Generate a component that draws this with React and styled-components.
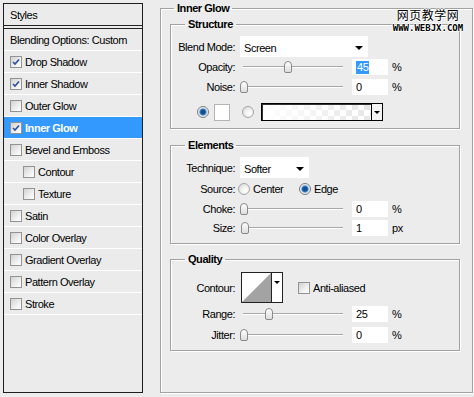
import styled, { createGlobalStyle } from 'styled-components';

const GlobalStyle = createGlobalStyle`
  html, body {
    margin: 0;
    padding: 0;
    background: #ececec;
  }
  body {
    font-family: "Liberation Sans", Tahoma, "DejaVu Sans", sans-serif;
    font-size: 11px;
    letter-spacing: -0.45px;
    color: #000;
  }
  * {
    box-sizing: border-box;
  }
`;

const Page = styled.div`
  position: relative;
  display: flex;
  align-items: flex-start;
  width: 474px;
  height: 397px;
  padding: 2px 0 0 3px;
  overflow: hidden;
`;

/* ---------- left: styles list ---------- */

const StylesPanel = styled.div`
  width: 140px;
  height: 390px;
  margin-top: 1px;
  border: 1px solid #1e1e1e;
  background: #ebebeb;
  display: flex;
  flex-direction: column;
  flex-shrink: 0;
`;

const PanelHeader = styled.div`
  height: 22px;
  padding-left: 6px;
  display: flex;
  align-items: center;
  border-bottom: 1px solid #222;
`;

const BlendingRow = styled.div`
  height: 23px;
  margin-top: 2px;
  padding-left: 6px;
  display: flex;
  align-items: center;
  border-top: 1px solid #222;
  border-bottom: 1px solid #fff;
`;

const StyleRow = styled.div`
  height: 22px;
  display: flex;
  align-items: center;
  gap: 3px;
  padding-left: ${p => (p.$indent ? 19 : 6)}px;
  border-bottom: 1px solid #fff;
  background: ${p => (p.$active ? '#3399ff' : 'transparent')};
  color: ${p => (p.$active ? '#fff' : '#000')};
  font-weight: ${p => (p.$active ? 'bold' : 'normal')};
`;

const Box = styled.span`
  width: 12px;
  height: 12px;
  flex-shrink: 0;
  display: inline-flex;
  align-items: center;
  justify-content: center;
  border: 1px solid #939393;
  background: linear-gradient(135deg, #d2d2d2 0%, #f0f0f0 60%, #fff 100%);
  margin-left: ${p => p.$ml || 0}px;
`;

const CheckBox = ({ checked, ml }) => (
  <Box $ml={ml}>
    {checked && (
      <svg width="10" height="10" viewBox="0 0 10 10">
        <path d="M2 5 L4 7 L8 2.5" fill="none" stroke="#2d4f9e" strokeWidth="1.6" />
      </svg>
    )}
  </Box>
);

/* ---------- right: group boxes ---------- */

const Group = styled.fieldset`
  margin: ${p => p.$mt || 0}px 0 0 ${p => p.$ml || 0}px;
  padding: ${p => p.$pad};
  width: ${p => p.$w}px;
  height: ${p => (p.$h ? `${p.$h}px` : 'auto')};
  min-width: 0;
  border: 1px solid #a2a2a2;
  box-shadow: 1px 1px 0 #fff, inset 1px 1px 0 #fff;
  flex-shrink: 0;
`;

const GroupTitle = styled.legend`
  margin-left: ${p => p.$ml}px;
  padding: 0 3px;
  font-weight: bold;
  line-height: 13px;
`;

const FieldRow = styled.div`
  display: flex;
  align-items: center;
  height: ${p => p.$h}px;
  margin-top: ${p => p.$mt || 0}px;
  padding-left: ${p => p.$pl || 0}px;
`;

const FieldLabel = styled.span`
  width: 64px;
  flex-shrink: 0;
  text-align: right;
  margin-right: ${p => (p.$gap === undefined ? 5 : p.$gap)}px;
  white-space: nowrap;
`;

const Select = styled.div`
  width: ${p => p.$w}px;
  height: 21px;
  background: #fff;
  display: flex;
  align-items: center;
  padding: 2px 5px 0 4px;
`;

const DownArrow = styled.span`
  margin-left: auto;
  width: 0;
  height: 0;
  border-left: 4px solid transparent;
  border-right: 4px solid transparent;
  border-top: 4px solid #000;
`;

const Slider = styled.div`
  position: relative;
  width: 100px;
  height: 16px;
  margin-left: 3px;
  flex-shrink: 0;

  &::before {
    content: '';
    position: absolute;
    left: 0;
    right: 0;
    top: 7px;
    height: 1px;
    background: #a8a8a8;
    border-bottom: 1px solid #fff;
  }
`;

const Thumb = styled.span`
  position: absolute;
  top: 2px;
  width: 8px;
  height: 12px;
  border: 1px solid #8a8a8a;
  border-radius: 4px 4px 2px 2px;
  background: linear-gradient(to bottom, #fdfdfd, #dedede);
`;

const NumberInput = styled.div`
  width: 36px;
  height: 16px;
  margin-left: 9px;
  padding-left: 4px;
  background: #fff;
  display: flex;
  align-items: center;
`;

const Selected = styled.span`
  background: #3399ff;
  color: #fff;
  padding: 0 1px;
  line-height: 13px;
`;

const Unit = styled.span`
  margin-left: 4px;
`;

const Radio = styled.span`
  width: 12px;
  height: 12px;
  flex-shrink: 0;
  border-radius: 50%;
  border: 1px solid ${p => (p.$checked ? '#7a7a7a' : '#a5a5a5')};
  margin-left: ${p => p.$ml || 0}px;
  background: ${p =>
    p.$checked
      ? 'radial-gradient(circle, #12508e 0 2px, #3d86c8 3px, #cfe2f2 4px, #f6f6f6 5px)'
      : 'radial-gradient(circle at 65% 65%, #fff 0, #f2f2f2 40%, #d2d2d2 100%)'};
`;

const RadioOption = styled.span`
  display: flex;
  align-items: center;
  width: ${p => p.$w}px;
  gap: 3px;
`;

const Swatch = styled.span`
  width: 16px;
  height: 17px;
  margin-left: 5px;
  background: #fff;
  border: 1px solid #b4b4b4;
`;

const GradientPicker = styled.span`
  width: 111px;
  height: 18px;
  margin-left: 7px;
  border: 1px solid #000;
  box-shadow: inset 1px 1px 0 #333;
  background:
    linear-gradient(to right, #fff 0%, rgba(255, 255, 255, 0) 100%),
    repeating-conic-gradient(#e6e6e6 0% 25%, #fff 0% 50%) 0 0 / 12px 12px;
`;

const PickerArrow = styled.span`
  width: 11px;
  height: 18px;
  background: #f4f4f4;
  border: 1px solid #000;
  border-left: none;
  display: flex;
  align-items: center;
  justify-content: center;

  &::after {
    content: '';
    border-left: 3px solid transparent;
    border-right: 3px solid transparent;
    border-top: 3px solid #000;
  }
`;

const ContourPicker = styled.span`
  display: flex;
  height: 31px;
  border: 1px solid #222;
  background: #fff;
`;

const ContourArrow = styled.span`
  width: 11px;
  display: flex;
  justify-content: center;
  padding-top: 8px;
  border-left: 1px solid #222;

  &::after {
    content: '';
    height: 0;
    border-left: 3px solid transparent;
    border-right: 3px solid transparent;
    border-top: 3px solid #000;
  }
`;

const CheckLabel = styled.span`
  margin-left: 3px;
`;

const Watermark = styled.div`
  position: absolute;
  left: 392px;
  top: 8px;
  width: 72px;
  display: flex;
  flex-direction: column;
  align-items: center;
  color: #000;
  letter-spacing: 0;
  text-shadow: 1px 0 #fff, -1px 0 #fff, 0 1px #fff, 0 -1px #fff;
`;

const WatermarkTitle = styled.span`
  font-family: "Noto Sans CJK SC", sans-serif;
  font-size: 12px;
  line-height: 14px;
  letter-spacing: 0.5px;
`;

const WatermarkUrl = styled.span`
  font-family: "DejaVu Sans Mono", monospace;
  font-weight: bold;
  font-size: 9px;
  line-height: 9px;
  margin-top: 2px;
`;

const styleItems = [
  { label: 'Drop Shadow', checked: true },
  { label: 'Inner Shadow', checked: true },
  { label: 'Outer Glow' },
  { label: 'Inner Glow', checked: true, active: true },
  { label: 'Bevel and Emboss' },
  { label: 'Contour', indent: true },
  { label: 'Texture', indent: true },
  { label: 'Satin' },
  { label: 'Color Overlay' },
  { label: 'Gradient Overlay' },
  { label: 'Pattern Overlay' },
  { label: 'Stroke' },
];

const SliderField = ({ label, value, unit = '%', selected, h = 20, mt }) => (
  <FieldRow $h={h} $mt={mt}>
    <FieldLabel>{label}</FieldLabel>
    <Slider>
      <Thumb style={{ left: value * 0.98 - 3 }} />
    </Slider>
    <NumberInput>{selected ? <Selected>{value}</Selected> : value}</NumberInput>
    <Unit>{unit}</Unit>
  </FieldRow>
);

const App = () => (
  <>
    <GlobalStyle />
    <Page>
      <StylesPanel>
        <PanelHeader>Styles</PanelHeader>
        <BlendingRow>Blending Options: Custom</BlendingRow>
        {styleItems.map(item => (
          <StyleRow key={item.label} $indent={item.indent} $active={item.active}>
            <CheckBox checked={item.checked} />
            {item.label}
          </StyleRow>
        ))}
      </StylesPanel>

      <Group $ml={17} $w={313} $h={391} $pad="3px 12px 0 9px">
        <GroupTitle $ml={4}>Inner Glow</GroupTitle>

        <Group $w={290} $pad="5px 0 6px 0">
          <GroupTitle $ml={14}>Structure</GroupTitle>
          <FieldRow $h={21}>
            <FieldLabel>Blend Mode:</FieldLabel>
            <Select $w={128}>
              Screen
              <DownArrow />
            </Select>
          </FieldRow>
          <SliderField label="Opacity:" value={45} selected />
          <SliderField label="Noise:" value={0} />
          <FieldRow $h={20} $mt={5} $pl={26}>
            <Radio $checked />
            <Swatch />
            <Radio $ml={12} />
            <GradientPicker />
            <PickerArrow />
          </FieldRow>
        </Group>

        <Group $w={290} $mt={10} $pad="5px 0 6px 0">
          <GroupTitle $ml={14}>Elements</GroupTitle>
          <FieldRow $h={21}>
            <FieldLabel>Technique:</FieldLabel>
            <Select $w={69}>
              Softer
              <DownArrow />
            </Select>
          </FieldRow>
          <FieldRow $h={22}>
            <FieldLabel $gap={3}>Source:</FieldLabel>
            <RadioOption $w={61}>
              <Radio />
              Center
            </RadioOption>
            <RadioOption>
              <Radio $checked />
              Edge
            </RadioOption>
          </FieldRow>
          <SliderField label="Choke:" value={0} h={18} />
          <SliderField label="Size:" value={1} unit="px" h={18} mt={1} />
        </Group>

        <Group $w={290} $mt={9} $pad="6px 0 5px 0">
          <GroupTitle $ml={14}>Quality</GroupTitle>
          <FieldRow $h={31}>
            <FieldLabel $gap={6}>Contour:</FieldLabel>
            <ContourPicker>
              <svg width="29" height="29" viewBox="0 0 29 29">
                <rect width="29" height="29" fill="#fff" />
                <polygon points="0,29 29,0 29,29" fill="#a3a3a3" />
              </svg>
              <ContourArrow />
            </ContourPicker>
            <CheckBox ml={15} />
            <CheckLabel>Anti-aliased</CheckLabel>
          </FieldRow>
          <SliderField label="Range:" value={25} mt={1} />
          <SliderField label="Jitter:" value={0} mt={1} />
        </Group>
      </Group>

      <Watermark>
        <WatermarkTitle>网页教学网</WatermarkTitle>
        <WatermarkUrl>WWW.WEBJX.COM</WatermarkUrl>
      </Watermark>
    </Page>
  </>
);

export default App;
